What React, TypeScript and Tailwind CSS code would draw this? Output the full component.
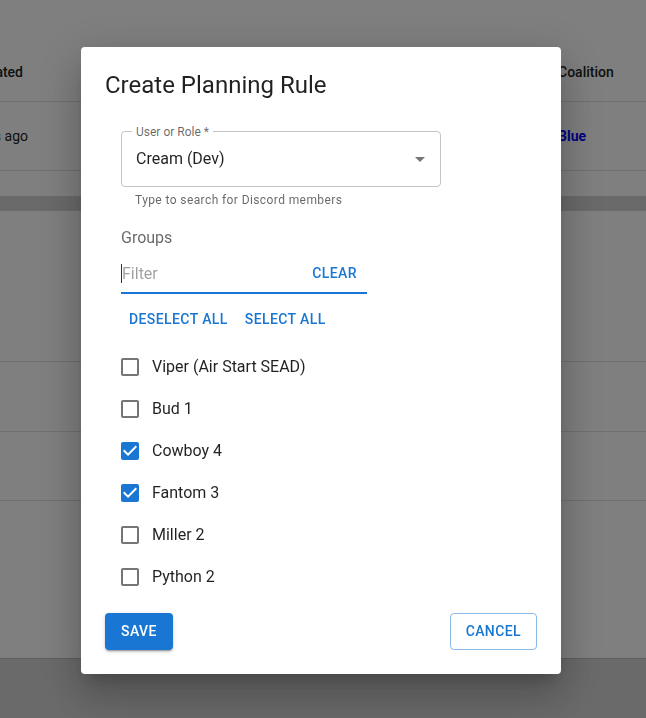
import React from 'react'

const groups = [
  { name: 'Viper (Air Start SEAD)', checked: false },
  { name: 'Bud 1', checked: false },
  { name: 'Cowboy 4', checked: true },
  { name: 'Fantom 3', checked: true },
  { name: 'Miller 2', checked: false },
  { name: 'Python 2', checked: false },
]

function CheckIcon({ checked }: { checked: boolean }) {
  if (checked) {
    return (
      <svg className="w-6 h-6 text-[#1976d2]" viewBox="0 0 24 24" fill="currentColor">
        <path d="M19 3H5c-1.11 0-2 .9-2 2v14c0 1.1.89 2 2 2h14c1.11 0 2-.9 2-2V5c0-1.1-.89-2-2-2zm-9 14l-5-5 1.41-1.41L10 14.17l7.59-7.59L19 8l-9 9z" />
      </svg>
    )
  }
  return (
    <svg className="w-6 h-6 text-[#757575]" viewBox="0 0 24 24" fill="currentColor">
      <path d="M19 5v14H5V5h14m0-2H5c-1.1 0-2 .9-2 2v14c0 1.1.9 2 2 2h14c1.1 0 2-.9 2-2V5c0-1.1-.9-2-2-2z" />
    </svg>
  )
}

function PageBehind() {
  return (
    <div className="flex flex-col h-[718px] bg-white text-[14px] text-[#222]">
      <div className="h-[44px]" />
      <div className="flex h-[58px] items-center border-b border-[#e0e0e0] font-medium">
        <div className="w-[23px] overflow-hidden flex justify-end whitespace-nowrap">Updated</div>
        <div className="ml-auto w-[88px]">Coalition</div>
      </div>
      <div className="flex h-[69px] items-center border-b border-[#e0e0e0]">
        <div className="w-[28px] overflow-hidden flex justify-end whitespace-nowrap">2 hours ago</div>
        <div className="ml-auto w-[88px] font-bold text-[#0000ff]">Blue</div>
      </div>
      <div className="h-[25px]" />
      <div className="h-[15px] bg-[#d4d4d4]" />
      <div className="h-[151px] border-b border-[#e0e0e0]" />
      <div className="h-[70px] border-b border-[#e0e0e0]" />
      <div className="h-[69px] border-b border-[#e0e0e0]" />
      <div className="h-[158px] border-b border-[#bdbdbd]" />
      <div className="flex-1 bg-[#d4d4d4]" />
    </div>
  )
}

export default function App() {
  return (
    <div className="relative h-[718px] overflow-hidden font-['Roboto',sans-serif]">
      <PageBehind />

      <div className="fixed inset-0 bg-black/50 pl-[81px] pt-[47px]">
        <div className="w-[480px] bg-white rounded-[4px] flex flex-col shadow-[0px_11px_15px_-7px_rgba(0,0,0,0.2),0px_24px_38px_3px_rgba(0,0,0,0.14),0px_9px_46px_8px_rgba(0,0,0,0.12)]">
          <h2 className="px-6 pt-[22px] text-[24px] leading-8 text-black/[0.87]">Create Planning Rule</h2>

          <div className="px-10 pt-[30px] flex flex-col">
            {/* select */}
            <div className="relative w-[320px] h-[56px] rounded-[4px] border border-[#c4c4c4] flex items-center pl-[14px]">
              <span className="absolute left-[10px] -top-[8px] bg-white px-[4px] text-[12px] leading-4 text-black/60">
                User or Role *
              </span>
              <span className="text-[16px] text-black/[0.87]">Cream (Dev)</span>
              <svg className="ml-auto mr-[8px] w-6 h-6 text-[#757575]" viewBox="0 0 24 24" fill="currentColor">
                <path d="M7 10l5 5 5-5z" />
              </svg>
            </div>
            <p className="mt-[3px] pl-[14px] text-[12px] leading-5 tracking-[0.4px] text-black/60">
              Type to search for Discord members
            </p>

            <p className="mt-[16px] text-[16px] leading-6 text-black/60">Groups</p>

            <div className="mt-[5px] w-[246px] h-[39px] flex items-center border-b-2 border-[#1976d2]">
              <span className="w-[1px] h-[19px] bg-black/80" />
              <span className="text-[16px] text-black/[0.38]">Filter</span>
              <button className="ml-auto mr-[2px] px-2 h-9 text-[14px] font-medium tracking-[0.4px] text-[#1976d2]">
                CLEAR
              </button>
            </div>

            <div className="mt-[7px] flex">
              <button className="px-2 h-9 text-[14px] font-medium tracking-[0.4px] text-[#1976d2]">
                DESELECT ALL
              </button>
              <button className="ml-px px-2 h-9 text-[14px] font-medium tracking-[0.4px] text-[#1976d2]">
                SELECT ALL
              </button>
            </div>

            <div className="mt-[9px] flex flex-col">
              {groups.map(g => (
                <label key={g.name} className="flex items-center h-[42px] gap-[10px] -ml-[3px]">
                  <CheckIcon checked={g.checked} />
                  <span className="text-[16px] text-black/[0.87]">{g.name}</span>
                </label>
              ))}
            </div>
          </div>

          <div className="flex items-center justify-between px-6 pt-[15px] pb-6">
            <button className="h-[37px] px-4 rounded-[4px] bg-[#1976d2] text-white text-[14px] font-medium tracking-[0.4px] shadow-[0px_3px_1px_-2px_rgba(0,0,0,0.2),0px_2px_2px_0px_rgba(0,0,0,0.14),0px_1px_5px_0px_rgba(0,0,0,0.12)]">
              SAVE
            </button>
            <button className="h-[37px] px-[15px] rounded-[4px] border border-[#1976d2]/50 text-[#1976d2] text-[14px] font-medium tracking-[0.4px]">
              CANCEL
            </button>
          </div>
        </div>
      </div>
    </div>
  )
}
